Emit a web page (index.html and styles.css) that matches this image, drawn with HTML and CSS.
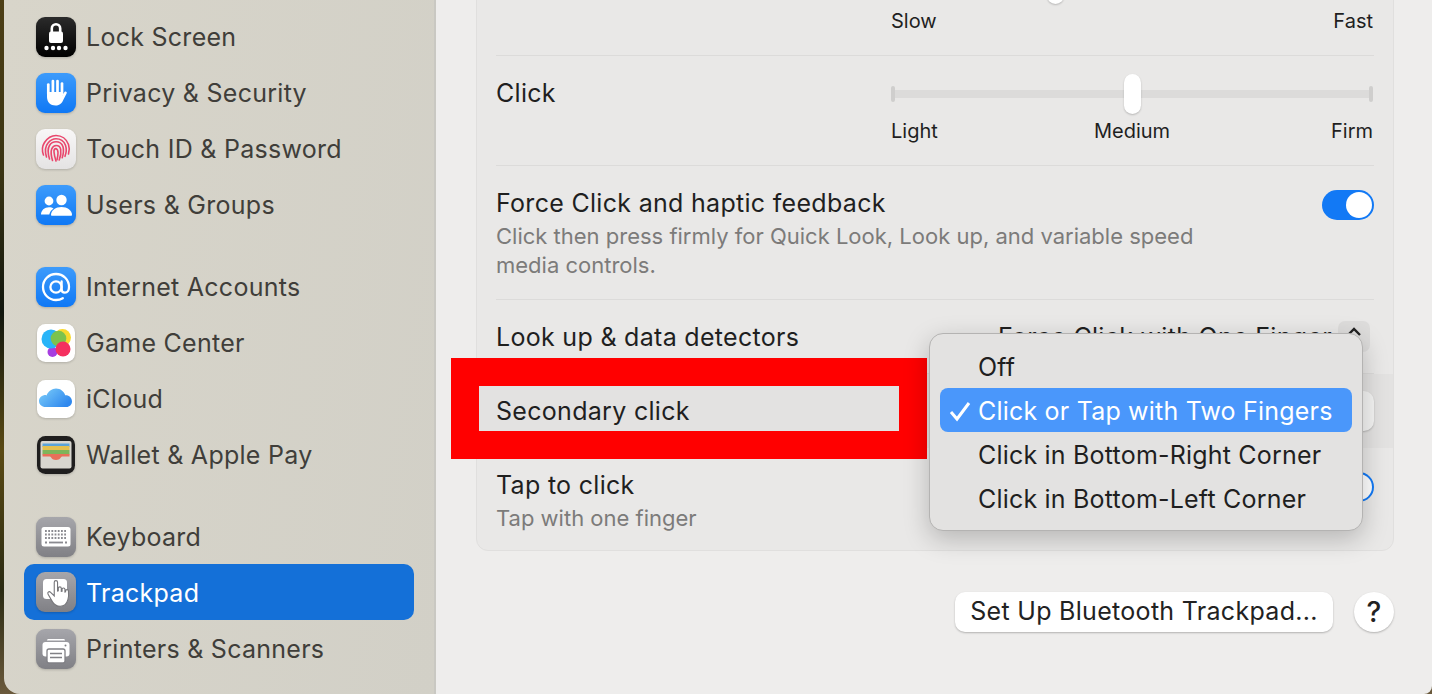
FILE: index.html

```html
<!DOCTYPE html>
<html lang="en">
<head>
  <meta charset="UTF-8" />
  <meta name="viewport" content="width=device-width, initial-scale=1.0"/>
  <title>Trackpad</title>
  <link rel="stylesheet" href="styles.css">
</head>
<body>
  <div class="window">
    <aside class="sidebar">
      <ul class="nav">
        <li class="nav-item">
          <svg class="icon" viewBox="0 0 40 40"><defs><linearGradient id="gLock" x1="0" y1="0" x2="0" y2="1"><stop offset="0" stop-color="#2b2b2b"/><stop offset="1" stop-color="#000"/></linearGradient></defs><rect width="40" height="40" rx="9" fill="url(#gLock)"/><path d="M15.800 16v-4.500a4.200 4.200 0 0 1 8.400 0V16" fill="none" stroke="#fff" stroke-width="2.600"/><rect x="13" y="14.500" width="14" height="11.500" rx="2" fill="#fff"/><g fill="#fff"><circle cx="10.500" cy="31" r="2.200"/><circle cx="17" cy="31" r="2.200"/><circle cx="23" cy="31" r="2.200"/><circle cx="29.500" cy="31" r="2.200"/></g></svg>
          <span>Lock Screen</span>
        </li>
        <li class="nav-item">
          <svg class="icon" viewBox="0 0 40 40"><use href="#blueTile"/><g fill="none" stroke="#fff" stroke-linecap="round" stroke-width="2.700"><path d="M12.300 11.500V21"/><path d="M16.900 8V20"/><path d="M21.500 8V20"/><path d="M26 10.500V21"/></g><path d="M11 19v5c0 5 3.500 8.500 8.500 8.500 4.500 0 6.500-2.500 8-6l3.200-6.300c.6-1.300-1.300-2.300-2.200-1.200L26 22.500V19z" fill="#fff"/></svg>
          <span>Privacy &amp; Security</span>
        </li>
        <li class="nav-item">
          <svg class="icon" viewBox="0 0 40 40"><defs><linearGradient id="gTouch" x1="0" y1="0" x2="0" y2="1"><stop offset="0" stop-color="#f8f7f7"/><stop offset="1" stop-color="#e4e3e3"/></linearGradient></defs><rect width="40" height="40" rx="9" fill="url(#gTouch)"/><g fill="none" stroke="#e9466c" stroke-width="1.600" stroke-linecap="round"><path d="M7.500 26c-1.500-4-1.300-9 1-12.500C11.500 9 16 6.500 20 6.500c5.500 0 10.500 3.500 12.500 9 1 3 1 6.500 0 9.500"/><path d="M10.500 28c-1.500-5-1.500-10.500 1.500-14 2-2.500 5-4.200 8-4.200 4.500 0 8 2.700 9.500 6.500 1 3 .8 7.500-.5 11"/><path d="M13.500 30c-1.500-5-2.200-10 0-13.500C15 14 17.500 12.800 20 12.800c3.500 0 6 2 7 5 .8 3 .5 7-.8 11"/><path d="M16.500 31.500c-1-3.500-2-8.500-.8-11.500 .8-2 2.500-3.500 4.500-3.500 2.500 0 4 1.500 4.500 3.800 .5 3-.2 7.500-1.500 10.700"/><path d="M20 19.500c-1.500 0-2.200 1.500-2 3.500 .2 3 1.200 6.500 2 9"/><path d="M20 19.800c1.500.3 2 2 2 4 0 2.500-.5 5-1 7"/></g></svg>
          <span>Touch ID &amp; Password</span>
        </li>
        <li class="nav-item">
          <svg class="icon" viewBox="0 0 40 40"><use href="#blueTile"/><g fill="#fff"><circle cx="13" cy="16" r="4.400"/><circle cx="25.500" cy="15" r="5.200"/><path d="M5 29.500c0-4 3.500-7.200 8-7.200 1.800 0 3.400.5 4.600 1.300-2.200 1.400-3.800 3.600-4.300 5.900z"/><path d="M15 30c0-4.500 4.700-8 10.500-8S36 25.500 36 30c0 .5-.3.800-.8.800H15.800c-.5 0-.8-.3-.8-.8z"/></g></svg>
          <span>Users &amp; Groups</span>
        </li>
        <li class="nav-item nav-gap">
          <svg class="icon" viewBox="0 0 40 40"><use href="#blueTile"/><g fill="none" stroke="#fff" stroke-width="2.300" stroke-linecap="round"><circle cx="20" cy="20" r="5.600"/><path d="M25.600 14.500v7.500c0 2.500 1.500 3.700 3.300 3.700 2.500 0 4.100-2.500 4.100-5.700C33 12.800 27.300 7 20 7S7 12.800 7 20s5.800 13 13 13c2.500 0 4.800-.6 6.800-1.800"/></g></svg>
          <span>Internet Accounts</span>
        </li>
        <li class="nav-item">
          <svg class="icon" viewBox="0 0 40 40"><rect x="1" y="1" width="38" height="38" rx="8.500" fill="#fff"/><circle cx="16.500" cy="29" r="5" fill="#a63ee0"/><circle cx="15" cy="16" r="9.500" fill="#29b4f8"/><circle cx="26.500" cy="14.500" r="8.500" fill="#f8d92e"/><circle cx="22.500" cy="15.500" r="7.800" fill="#7cc24e"/><circle cx="27" cy="26" r="7.500" fill="#f5305f"/></svg>
          <span>Game Center</span>
        </li>
        <li class="nav-item">
          <svg class="icon" viewBox="0 0 40 40"><defs><linearGradient id="gCloud" x1="0" y1="0" x2="1" y2=".6"><stop offset="0" stop-color="#7fd0fa"/><stop offset="1" stop-color="#2f88ee"/></linearGradient></defs><rect x="1" y="1" width="38" height="38" rx="8.500" fill="#fff"/><path d="M9.500 28C6 28 3 25.500 3 22c0-3 2.200-5.300 5-5.800.8-.2 1.800-.1 2.500.2C12 12.500 16 9.500 20 9.500c4.500 0 8 2.800 9.200 6.800C33 16 36 18.800 36 22.500 36 25.500 33.500 28 30.500 28z" fill="url(#gCloud)"/></svg>
          <span>iCloud</span>
        </li>
        <li class="nav-item">
          <svg class="icon" viewBox="0 0 40 40"><rect x="1" y="1" width="38" height="38" rx="8.500" fill="#1f1e1e"/><rect x="4.500" y="6" width="31" height="27.500" rx="2" fill="#d8d6cf"/><rect x="6.500" y="8.500" width="27" height="3.500" fill="#5aa3d8"/><rect x="6.500" y="11" width="27" height="4" fill="#e3c04e"/><rect x="6.500" y="15" width="27" height="4.500" fill="#7fb45a"/><path d="M6.500 19h27v2.500H26c-1 0-1.500 3.500-6 3.500s-5-3.500-6-3.500H6.500z" fill="#e8705a"/></svg>
          <span>Wallet &amp; Apple Pay</span>
        </li>
        <li class="nav-item nav-gap">
          <svg class="icon" viewBox="0 0 40 40"><use href="#greyTile"/><rect x="5.500" y="10" width="29" height="19.500" rx="2.500" fill="#fff"/><path d="M9 14h22M9 17.500h22M9 21h22" stroke="#8a8a90" stroke-width="1.800" stroke-dasharray="1.800 1.400"/><path d="M13 25.500h14" stroke="#8a8a90" stroke-width="1.800"/><path d="M9 25.500h2M29 25.500h2" stroke="#8a8a90" stroke-width="1.800"/></svg>
          <span>Keyboard</span>
        </li>
        <li class="nav-item active">
          <svg class="icon" viewBox="0 0 40 40"><use href="#greyTile"/><rect x="7" y="7" width="24" height="20" rx="3.500" fill="#fff"/><path transform="translate(-1 -2) scale(1.100)" d="M17.500 11.200c0-2 3-2 3 0v8l.7-.2V16.500c0-1.600 2.700-1.600 2.700 0V19.500l.7-.1v-1.900c0-1.500 2.600-1.500 2.600 0V20l.6-.1V19c0-1.500 2.600-1.500 2.600 0 .3 3 .2 6-.5 8-.8 3-3 6-7 6-3.500 0-5.500-1.500-7-4l-4-7c-1-1.800 1-3 2.300-1.700l3.300 3.200z" fill="#fff" stroke="#76767a" stroke-width="1"/></svg>
          <span>Trackpad</span>
        </li>
        <li class="nav-item">
          <svg class="icon" viewBox="0 0 40 40"><use href="#greyTile"/><path d="M11 11.500c0-1 .7-1.500 1.500-1.500h15c.8 0 1.500.5 1.500 1.500H11z" fill="#fff"/><rect x="6.500" y="13" width="27" height="14.500" rx="3" fill="#fff"/><circle cx="29.500" cy="16.500" r="1" fill="#808085"/><rect x="11" y="20" width="18" height="14" rx="2" fill="#fff" stroke="#808085" stroke-width="1.300"/><path d="M14 24.500h12M14 28.500h12" stroke="#808085" stroke-width="1.300"/></svg>
          <span>Printers &amp; Scanners</span>
        </li>
      </ul>
    </aside>

    <main class="main">
      <section class="card">
        <div class="row row-slider">
          <div class="slider">
            <div class="slider-track">
              <span class="tick"></span>
              <span class="tick"></span>
              <span class="thumb" style="left: 34%"></span>
            </div>
            <div class="slider-labels">
              <span>Slow</span>
              <span></span>
              <span>Fast</span>
            </div>
          </div>
        </div>
        <div class="row row-slider">
          <div class="row-title">Click</div>
          <div class="slider">
            <div class="slider-track">
              <span class="tick"></span>
              <span class="tick"></span>
              <span class="thumb" style="left: 50%"></span>
            </div>
            <div class="slider-labels">
              <span>Light</span>
              <span>Medium</span>
              <span>Firm</span>
            </div>
          </div>
        </div>
        <div class="row row-text">
          <div>
            <div class="row-title">Force Click and haptic feedback</div>
            <div class="row-sub">Click then press firmly for Quick Look, Look up, and variable speed media controls.</div>
          </div>
          <span class="toggle"></span>
        </div>
        <div class="row row-select">
          <div class="row-title">Look up &amp; data detectors</div>
          <div class="select-plain">
            <span>Force Click with One Finger</span>
            <span class="stepper">
              <svg viewBox="0 0 20 30" width="20" height="30"><path d="M4 14l6-6 6 6" fill="none" stroke="#222" stroke-width="2.400"/></svg>
            </span>
          </div>
        </div>
        <div class="row row-select row-current">
          <div class="row-title">Secondary click</div>
          <span class="select-button"></span>
        </div>
        <div class="row row-text row-last">
          <div>
            <div class="row-title">Tap to click</div>
            <div class="row-sub">Tap with one finger</div>
          </div>
          <span class="toggle"></span>
        </div>
      </section>

      <div class="footer">
        <button class="btn">Set Up Bluetooth Trackpad...</button>
        <button class="btn-help">?</button>
      </div>
    </main>
  </div>

  <!-- red callout drawn over the screenshot -->
  <div class="callout"></div>

  <div class="menu">
    <div class="menu-item">Off</div>
    <div class="menu-item selected">
      <svg class="check" viewBox="0 0 22 22" width="22" height="22"><path d="M2 12l6 7L20 3" fill="none" stroke="#fff" stroke-width="3"/></svg>
      Click or Tap with Two Fingers
    </div>
    <div class="menu-item">Click in Bottom-Right Corner</div>
    <div class="menu-item">Click in Bottom-Left Corner</div>
  </div>

  <svg class="defs" width="0" height="0">
    <defs>
      <linearGradient id="gBlue" x1="0" y1="0" x2="0" y2="1"><stop offset="0" stop-color="#3d9bfb"/><stop offset="1" stop-color="#0f78f5"/></linearGradient>
      <linearGradient id="gGrey" x1="0" y1="0" x2="0" y2="1"><stop offset="0" stop-color="#a6a6ab"/><stop offset="1" stop-color="#808085"/></linearGradient>
      <rect id="blueTile" width="40" height="40" rx="9" fill="url(#gBlue)"/>
      <rect id="greyTile" width="40" height="40" rx="9" fill="url(#gGrey)"/>
    </defs>
  </svg>
</body>
</html>
```

FILE: styles.css

```css
* {
  box-sizing: border-box;
}

body {
  margin: 0;
  height: 694px;
  overflow: hidden;
  position: relative;
  font-family: Inter, "Liberation Sans", sans-serif;
  background: linear-gradient(180deg, #4d3f16 0%, #3a3413 25%, #11160e 45%, #5a4a14 65%, #2a2a12 85%, #6b5a3c 100%);
}

.window {
  display: flex;
  height: 694px;
  margin-left: 4px;
  overflow: hidden;
  border-radius: 0 0 8px 16px;
}

/* sidebar */
.sidebar {
  width: 432px;
  flex-shrink: 0;
  padding: 9px 0 0 20px;
  background: linear-gradient(100deg, #d8d5ca 0%, #d2d0c7 100%);
  border-right: 2px solid #c9c8c2;
}

.nav {
  list-style: none;
  margin: 0;
  padding: 0;
  width: 390px;
}

.nav-item {
  display: flex;
  align-items: center;
  gap: 10px;
  height: 56px;
  padding-left: 12px;
  font-size: 25px;
  letter-spacing: 0.27px;
  color: #403e3a;
  border-radius: 10px;
}

.nav-gap {
  margin-top: 26px;
}

.nav-item.active {
  background: #1470d8;
  color: #fff;
  position: relative;
  top: -1px;
}

.nav-item.active span {
  padding-top: 2px;
}

.icon {
  width: 40px;
  height: 40px;
  flex-shrink: 0;
  filter: drop-shadow(0 1px 1px rgba(0, 0, 0, 0.18));
}

/* main pane */
.main {
  flex: 1;
  padding: 0 38px 0 40px;
  background: #eeedec;
}

.card {
  margin-top: -55px;
  background: #e9e8e7;
  border: 1px solid #e0dfde;
  border-radius: 12px;
  overflow: hidden;
}

.row {
  display: flex;
  justify-content: space-between;
  margin: 0 19px;
  border-bottom: 1px solid #dcdbda;
  color: #1f1f1f;
}

.row-title {
  font-size: 25px;
  line-height: 28px;
  letter-spacing: 0.3px;
}

.row-sub {
  font-size: 22px;
  line-height: 29px;
  margin-top: 5px;
  max-width: 720px;
  color: #7c7b7a;
}

.row-slider {
  height: 110px;
  padding-top: 18px;
}

.row-slider .row-title {
  line-height: 38px;
}

.slider {
  width: 482px;
  margin-left: auto;
  margin-right: 1px;
}

.slider-track {
  position: relative;
  display: flex;
  justify-content: space-between;
  align-items: center;
  height: 40px;
  background: linear-gradient(#dcdbda, #dcdbda) center / 100% 8px no-repeat;
}

.tick {
  width: 4px;
  height: 16px;
  border-radius: 2px;
  background: #cfcecd;
}

.thumb {
  position: absolute;
  top: 0;
  width: 17px;
  height: 40px;
  margin-left: -8px;
  border-radius: 9px;
  background: #fff;
  box-shadow: 0 1px 2px rgba(0, 0, 0, 0.22);
}

.slider-labels {
  display: grid;
  grid-template-columns: 1fr auto 1fr;
  margin-top: 5px;
  font-size: 20px;
  line-height: 24px;
}

.slider-labels span:last-child {
  text-align: right;
}

.row-text {
  height: 134px;
  padding-top: 23px;
}

.row-last {
  height: 102px;
  border-bottom: none;
}

.row-select {
  height: 74px;
  align-items: center;
}

.row-current {
  margin: 0;
  padding: 0 19px;
  border-bottom: none;
  background: #e3e2e1;
}

.select-plain {
  display: flex;
  align-items: center;
  gap: 6px;
  font-size: 25px;
  letter-spacing: 0.3px;
}

.stepper {
  display: flex;
  width: 32px;
  height: 31px;
  justify-content: center;
  margin-right: 4px;
  border-radius: 7px;
  background: #dddcdb;
}

.select-button {
  width: 400px;
  height: 40px;
  border-radius: 10px;
  background: #f4f4f3;
  box-shadow: 0 1px 2px rgba(0, 0, 0, 0.2);
}

.toggle {
  position: relative;
  width: 52px;
  height: 30px;
  margin-top: 1px;
  border-radius: 15px;
  background: #1279f5;
}

.toggle:after {
  content: '';
  position: absolute;
  top: 2px;
  right: 2px;
  width: 26px;
  height: 26px;
  border-radius: 50%;
  background: #fff;
}

.footer {
  display: flex;
  justify-content: flex-end;
  gap: 21px;
  margin-top: 41px;
}

.btn,
.btn-help {
  height: 40px;
  border: none;
  background: #fff;
  color: #222;
  font-family: inherit;
  font-size: 25px;
  box-shadow: 0 1px 2px rgba(0, 0, 0, 0.25);
}

.btn {
  width: 378px;
  padding: 0 0 2px;
  border-radius: 10px;
  letter-spacing: 0.3px;
}

.btn-help {
  width: 40px;
  padding: 0;
  border-radius: 50%;
  font-size: 28px;
  font-weight: 500;
}

/* overlays */
.callout {
  position: absolute;
  left: 451px;
  top: 358px;
  width: 476px;
  height: 101px;
  border: solid #ff0000;
  border-width: 28px;
}

.menu {
  position: absolute;
  left: 929px;
  top: 333px;
  width: 434px;
  height: 198px;
  padding: 10px 10px;
  background: #e3e2e1;
  border: 1px solid #b4b3b2;
  border-radius: 14px;
  box-shadow: 0 8px 26px rgba(0, 0, 0, 0.22);
}

.menu-item {
  position: relative;
  height: 44px;
  padding-left: 38px;
  border-radius: 8px;
  font-size: 25px;
  line-height: 46px;
  letter-spacing: 0.2px;
  color: #1f1f1f;
}

.menu-item.selected {
  background: #4a97fb;
  color: #fff;
}

.check {
  position: absolute;
  left: 9px;
  top: 12px;
}

.defs {
  position: absolute;
}
```
